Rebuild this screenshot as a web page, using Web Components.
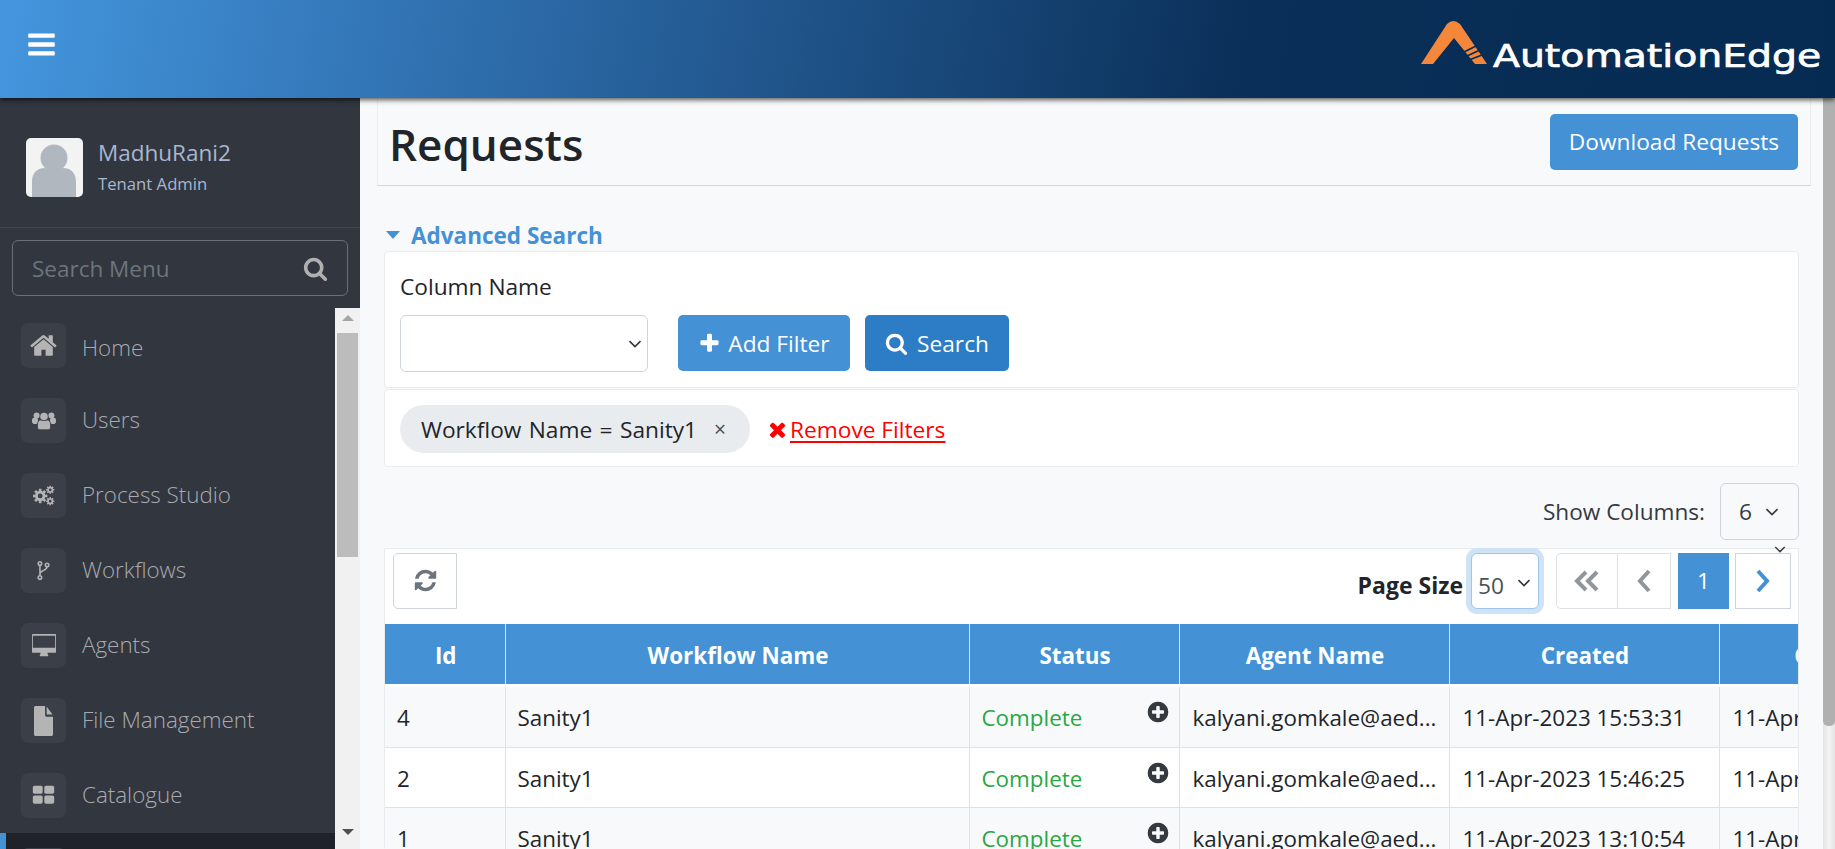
<!DOCTYPE html>
<html>
<head>
<meta charset="utf-8">
<title>Requests</title>
<style>
  html, body { margin: 0; height: 100%; overflow: hidden; }
  body { font-family: "Open Sans", "Liberation Sans", sans-serif; color: #212529; background: #f8f9fa; }
  ae-app { height: 100vh; }
</style>
</head>
<body>
<ae-app>
  <ae-header slot="header"></ae-header>
  <ae-sidebar slot="sidebar" user="MadhuRani2" role="Tenant Admin">
    <ae-nav-item icon="home">Home</ae-nav-item>
    <ae-nav-item icon="users">Users</ae-nav-item>
    <ae-nav-item icon="cogs">Process Studio</ae-nav-item>
    <ae-nav-item icon="fork">Workflows</ae-nav-item>
    <ae-nav-item icon="desktop">Agents</ae-nav-item>
    <ae-nav-item icon="file">File Management</ae-nav-item>
    <ae-nav-item icon="grid">Catalogue</ae-nav-item>
    <ae-nav-item icon="desktop" active></ae-nav-item>
  </ae-sidebar>
  <ae-requests slot="main"></ae-requests>
</ae-app>

<script>
// font awesome 4 style glyphs, drawn on a 1792 box unless a viewbox is given
const ICONS = {
  bars: 'M1664 1344v128q0 26-19 45t-45 19h-1408q-26 0-45-19t-19-45v-128q0-26 19-45t45-19h1408q26 0 45 19t19 45zm0-512v128q0 26-19 45t-45 19h-1408q-26 0-45-19t-19-45v-128q0-26 19-45t45-19h1408q26 0 45 19t19 45zm0-512v128q0 26-19 45t-45 19h-1408q-26 0-45-19t-19-45v-128q0-26 19-45t45-19h1408q26 0 45 19t19 45z',
  search: 'M1216 832q0-185-131.5-316.5t-316.5-131.5-316.5 131.5-131.5 316.5 131.5 316.5 316.5 131.5 316.5-131.5 131.5-316.5zm512 832q0 52-38 90t-90 38q-54 0-90-38l-343-342q-179 124-399 124-143 0-273.5-55.5t-225-150-150-225-55.5-273.5 55.5-273.5 150-225 225-150 273.5-55.5 273.5 55.5 225 150 150 225 55.5 273.5q0 220-124 399l343 343q37 37 37 90z',
  home: 'M1472 992v480q0 26-19 45t-45 19h-384v-384h-256v384h-384q-26 0-45-19t-19-45v-480q0-1 .5-3t.5-3l575-474 575 474q1 2 1 6zm223-69l-62 74q-8 9-21 11h-3q-13 0-21-7l-692-577-692 577q-12 8-24 7-13-2-21-11l-62-74q-8-10-7-23.5t11-21.5l719-599q32-26 76-26t76 26l244 204v-195q0-14 9-23t23-9h192q14 0 23 9t9 23v408l219 182q10 8 11 21.5t-7 23.5z',
  plus: 'M1600 736v192q0 40-28 68t-68 28h-416v416q0 40-28 68t-68 28h-192q-40 0-68-28t-28-68v-416h-416q-40 0-68-28t-28-68v-192q0-40 28-68t68-28h416v-416q0-40 28-68t68-28h192q40 0 68 28t28 68v416h416q40 0 68 28t28 68z',
  plusCircle: 'M1344 960v-128q0-26-19-45t-45-19h-256v-256q0-26-19-45t-45-19h-128q-26 0-45 19t-19 45v256h-256q-26 0-45 19t-19 45v128q0 26 19 45t45 19h256v256q0 26 19 45t45 19h128q26 0 45-19t19-45v-256h256q26 0 45-19t19-45zm320-64q0 209-103 385.5t-279.5 279.5-385.5 103-385.5-103-279.5-279.5-103-385.5 103-385.5 279.5-279.5 385.5-103 385.5 103 279.5 279.5 103 385.5z',
  times: 'M1490 1322q0 40-28 68l-136 136q-28 28-68 28t-68-28l-294-294-294 294q-28 28-68 28t-68-28l-136-136q-28-28-28-68t28-68l294-294-294-294q-28-28-28-68t28-68l136-136q28-28 68-28t68 28l294 294 294-294q28-28 68-28t68 28l136 136q28 28 28 68t-28 68l-294 294 294 294q28 28 28 68z',
  refresh: 'M1639 1056q0 5-1 7-64 268-268 434.5t-478 166.5q-146 0-282.5-55t-243.5-157l-129 129q-19 19-45 19t-45-19-19-45v-448q0-26 19-45t45-19h448q26 0 45 19t19 45-19 45l-137 137q71 66 161 102t187 36q134 0 250-65t186-179q11-17 53-117 8-23 30-23h192q13 0 22.5 9.5t9.5 22.5zm25-800v448q0 26-19 45t-45 19h-448q-26 0-45-19t-19-45 19-45l138-138q-148-137-349-137-134 0-250 65t-186 179q-11 17-53 117-8 23-30 23h-199q-13 0-22.5-9.5t-9.5-22.5v-7q65-268 270-434.5t480-166.5q146 0 284 55.5t245 156.5l130-129q19-19 45-19t45 19 19 45z',
  file: 'M1152 512v-472q22 14 36 28l408 408q14 14 28 36h-472zm-128 32q0 40 28 68t68 28h544v1056q0 40-28 68t-68 28h-1344q-40 0-68-28t-28-68v-1600q0-40 28-68t68-28h800v544z',
  grid: 'M832 1024v384q0 52-38 90t-90 38h-512q-52 0-90-38t-38-90v-384q0-52 38-90t90-38h512q52 0 90 38t38 90zm0-768v384q0 52-38 90t-90 38h-512q-52 0-90-38t-38-90v-384q0-52 38-90t90-38h512q52 0 90 38t38 90zm896 768v384q0 52-38 90t-90 38h-512q-52 0-90-38t-38-90v-384q0-52 38-90t90-38h512q52 0 90 38t38 90zm0-768v384q0 52-38 90t-90 38h-512q-52 0-90-38t-38-90v-384q0-52 38-90t90-38h512q52 0 90 38t38 90z',
  desktop: 'M1728 992v-832q0-13-9.5-22.5t-22.5-9.5h-1600q-13 0-22.5 9.5t-9.5 22.5v832q0 13 9.5 22.5t22.5 9.5h1600q13 0 22.5-9.5t9.5-22.5zm128-832v1088q0 66-47 113t-113 47h-544q0 37 16 77.5t32 71 16 43.5q0 26-19 45t-45 19h-512q-26 0-45-19t-19-45q0-14 16-44t32-70 16-78h-544q-66 0-113-47t-47-113v-1088q0-66 47-113t113-47h1632q66 0 113 47t47 113z',
};

function gear(cx, cy, r) {
  const teeth = 8;
  let out = '';
  for (let i = 0; i < teeth; i++) {
    const a = i * 360 / teeth;
    out += `<rect x="${cx - r * 0.24}" y="${cy - r * 1.3}" width="${r * 0.48}" height="${r * 0.6}" transform="rotate(${a} ${cx} ${cy})"/>`;
  }
  out += `<circle cx="${cx}" cy="${cy}" r="${r * 0.68}" fill="none" stroke="currentColor" stroke-width="${r * 0.5}"/>`;
  return out;
}

// the few that have no single path here are made of plain shapes
const SHAPES = {
  users: `<svg viewBox="0 0 24 20" fill="currentColor">
      <circle cx="4.6" cy="5" r="3"/><circle cx="19.4" cy="5" r="3"/><circle cx="12" cy="6" r="3.8"/>
      <rect x="0" y="7" width="6" height="6.5" rx="2.8"/><rect x="18" y="7" width="6" height="6.5" rx="2.8"/>
      <path d="M5.5 13.5c0-3 2-4.3 3.500-4 1 .7 5 .7 6 0 1.500-.3 3.500 1 3.500 4v3.500c0 1.300-1 2.300-2.300 2.300H7.800c-1.300 0-2.300-1-2.300-2.300z" stroke="#3a3f48" stroke-width=".8"/>
    </svg>`,
  cogs: `<svg viewBox="0 0 24 22" fill="currentColor">${gear(8, 11.5, 5.8)}${gear(18.5, 5, 3.3)}${gear(18.5, 17, 3.3)}</svg>`,
  fork: `<svg viewBox="0 0 16 24" fill="none" stroke="currentColor" stroke-width="2">
      <circle cx="3.500" cy="3.200" r="2.200"/><circle cx="3.500" cy="20.800" r="2.200"/><circle cx="12.500" cy="5" r="2.200"/>
      <path d="M3.500 5.400v13.200M12.500 7.200c0 5-9 4.300-9 9.300"/>
    </svg>`,
  file: `<svg viewBox="128 0 1536 1792" preserveAspectRatio="none" fill="currentColor"><path d="${ICONS.file}"/></svg>`,
};

function icon(name) {
  if (SHAPES[name]) return SHAPES[name];
  return `<svg viewBox="0 0 1792 1792" fill="currentColor"><path d="${ICONS[name]}"/></svg>`;
}

const CHEVRON = '<svg viewBox="0 0 14 8" fill="none" stroke="currentColor" stroke-width="1.700"><path d="M1.500 1.200 7 6.500l5.500-5.300"/></svg>';

class AeApp extends HTMLElement {
  constructor() {
    super();
    this.attachShadow({ mode: 'open' }).innerHTML = `
      <style>
        :host { display: grid; grid-template-columns: 360px 1fr; grid-template-rows: 98px 1fr; }
        .top { grid-column: 1 / 3; position: relative; z-index: 2; }
        .side, .main { min-height: 0; min-width: 0; overflow: hidden; }
      </style>
      <div class="top"><slot name="header"></slot></div>
      <div class="side"><slot name="sidebar"></slot></div>
      <div class="main"><slot name="main"></slot></div>`;
  }
}

class AeHeader extends HTMLElement {
  constructor() {
    super();
    this.attachShadow({ mode: 'open' }).innerHTML = `
      <style>
        :host {
          display: flex; align-items: flex-start; justify-content: space-between; height: 98px;
          padding: 0 16px 0 26px; box-sizing: border-box;
          background: linear-gradient(100deg, #4496de 0%, #2f6fae 25%, #0a2f58 68%, #062b52 100%);
          box-shadow: 0 2px 5px rgba(0, 0, 0, .65);
        }
        .burger { width: 31px; height: 31px; color: #fff; margin-top: 29px; }
        .burger svg { width: 100%; height: 100%; display: block; }
        .logo { display: flex; align-items: flex-end; gap: 6px; margin-top: 20px; }
        .logo svg { width: 66px; height: 46px; display: block; flex: none; margin-left: 1px; }
        .mark { width: 326px; height: 46px; display: flex; align-items: flex-end; }
        .name {
          display: block; color: #fff; font: 400 32px/32px "DejaVu Sans", sans-serif;
          -webkit-text-stroke: .7px #fff; transform: scaleX(1.23); transform-origin: left bottom;
          white-space: nowrap; margin-bottom: -6px;
        }
      </style>
      <div class="burger">${icon('bars')}</div>
      <div class="logo">
        <svg viewBox="0 0 66 46">
          <path d="M0 44 26 4Q32-2 39 4L66 44H54L33 18 12 44z" fill="#f5873a"/>
          <path d="M43 32l14-7M46 36l13-6M48 40l13-5" stroke="#082c55" stroke-width="1.800"/>
        </svg>
        <div class="mark"><span class="name">AutomationEdge</span></div>
      </div>`;
  }
}

class AeSidebar extends HTMLElement {
  constructor() {
    super();
    this.attachShadow({ mode: 'open' }).innerHTML = `
      <style>
        :host { display: flex; flex-direction: column; height: 100%; background: #32363f; }
        .profile { display: flex; gap: 15px; height: 130px; padding: 40px 26px 0; box-sizing: border-box; border-bottom: 1px solid #41454e; }
        .avatar { width: 57px; height: 59px; border-radius: 5px; background: #f3f3f3; overflow: hidden; flex: none; }
        .avatar svg { display: block; width: 100%; height: 100%; }
        .user { font-size: 22.5px; line-height: 30px; color: #a7b7d1; }
        .role { font-size: 16.7px; line-height: 24px; margin-top: 4px; color: #a7b7d1; }
        .search {
          display: flex; align-items: center; justify-content: space-between; height: 56px; margin: 12px; padding: 0 19px;
          box-sizing: border-box; border: 1px solid #6b7075; border-radius: 6px; font-size: 22.5px; color: #6c757d;
        }
        .search svg { width: 25px; height: 25px; color: #b0b0b0; display: block; }
        .list { position: relative; flex: 1; min-height: 0; overflow: hidden; }
        .bar { position: absolute; top: 0; right: 0; bottom: 0; width: 25px; background: #f1f1f1; }
        .thumb { position: absolute; top: 25px; left: 2px; right: 2px; height: 224px; background: #bcbcbc; }
        .up, .down { position: absolute; left: 7px; width: 0; height: 0; border-left: 6px solid transparent; border-right: 6px solid transparent; }
        .up { top: 7px; border-bottom: 6px solid #a5a5a5; }
        .down { top: 521px; border-top: 6px solid #505050; }
      </style>
      <div class="profile">
        <div class="avatar">
          <svg viewBox="0 0 57 59">
            <circle cx="28" cy="20" r="13.500" fill="#b0b7be"/>
            <path d="M6 59V44C6 34 12 30 19 30q9 5 18 0c7 0 13 4 13 14v15z" fill="#b0b7be"/>
          </svg>
        </div>
        <div class="who"><div class="user">${this.getAttribute('user')}</div><div class="role">${this.getAttribute('role')}</div></div>
      </div>
      <div class="search"><span>Search Menu</span>${icon('search')}</div>
      <div class="list">
        <slot></slot>
        <div class="bar"><i class="up"></i><div class="thumb"></div><i class="down"></i></div>
      </div>`;
  }
}

class AeNavItem extends HTMLElement {
  constructor() {
    super();
    this.attachShadow({ mode: 'open' }).innerHTML = `
      <style>
        :host { display: flex; gap: 16px; height: 75px; padding: 15px 0 0 21px; box-sizing: border-box; color: #a9abb0; font-size: 22.4px; font-weight: 300; }
        :host([active]) { background: #1f2229; box-shadow: inset 6px 0 0 #4491d6; }
        .box { width: 45px; height: 45px; flex: none; border-radius: 7px; background: #3a3f48; display: flex; align-items: center; justify-content: center; color: #b4b4b4; }
        .box svg { width: 24px; height: 24px; display: block; }
        .box.home svg { width: 29px; height: 29px; }
        .box.grid svg { width: 23px; height: 23px; }
        .box.file svg { width: 19px; height: 30px; }
        .box.fork svg { width: 13px; height: 19px; }
        .box.users svg, .box.cogs svg { width: 24px; height: 21px; }
        .label { line-height: 44px; }
        :host(:first-child) .label { line-height: 50px; }
      </style>
      <span class="box ${this.getAttribute('icon')}">${icon(this.getAttribute('icon'))}</span>
      <span class="label"><slot></slot></span>`;
  }
}

class AeButton extends HTMLElement {
  constructor() {
    super();
    const ic = this.getAttribute('icon');
    this.attachShadow({ mode: 'open' }).innerHTML = `
      <style>
        :host { display: inline-flex; align-items: center; justify-content: center; gap: 7px; height: 56px; box-sizing: border-box; border-radius: 5px; background: #4491d6; color: #fff; font-size: 22.7px; padding: 0 20px; }
        :host([dark]) { background: #2d7cc6; gap: 9px; }
        svg { width: 23px; height: 23px; display: block; }
      </style>
      ${ic ? icon(ic) : ''}<span><slot></slot></span>`;
  }
}

class AeSelect extends HTMLElement {
  constructor() {
    super();
    this.attachShadow({ mode: 'open' }).innerHTML = `
      <style>
        :host { display: flex; align-items: center; justify-content: space-between; height: 57px; box-sizing: border-box; background: #fff; border: 1px solid #ced4da; border-radius: 6px; color: #495057; font-size: 22.7px; }
        svg { width: 14px; height: 8px; display: block; color: #343a40; }
      </style>
      <span><slot></slot></span>${CHEVRON}`;
  }
}

class AeTable extends HTMLElement {
  constructor() {
    super();
    const cols = [120, 464, 210, 270, 270, 270];
    const heads = ['Id', 'Workflow Name', 'Status', 'Agent Name', 'Created', 'Completed'];
    const rows = [
      ['4', '11-Apr-2023 15:53:31'],
      ['2', '11-Apr-2023 15:46:25'],
      ['1', '11-Apr-2023 13:10:54'],
    ];
    this.attachShadow({ mode: 'open' }).innerHTML = `
      <style>
        :host { display: block; overflow: hidden; }
        table { border-collapse: collapse; table-layout: fixed; width: ${cols.reduce((a, b) => a + b)}px; font-size: 22.4px; }
        th { height: 60px; padding: 2px 0 0 2px; box-sizing: border-box; background: #4491d6; color: #fff; font-weight: 700; border-right: 1px solid #e3e6ea; white-space: nowrap; overflow: hidden; box-shadow: 0 3px 0 #dee2e6; }
        tbody::before { content: ""; display: block; height: 3px; }
        td { height: 60px; padding: 2px 0 0 12px; box-sizing: border-box; border-right: 1px solid #dee2e6; border-bottom: 1px solid #dee2e6; color: #212529; white-space: nowrap; overflow: hidden; position: relative; }
        td:nth-child(n+4) { padding-left: 13px; }
        tr:nth-child(odd) td { background: #f8f9fa; }
        tr:nth-child(even) td { background: #fff; }
        .ok { color: #28a745; }
        .more { position: absolute; right: 9px; top: 13px; width: 24px; height: 24px; color: #343a40; }
        .more svg { width: 100%; height: 100%; display: block; }
      </style>
      <table>
        <colgroup>${cols.map((c) => `<col style="width:${c}px">`).join('')}</colgroup>
        <thead><tr>${heads.map((h) => `<th>${h}</th>`).join('')}</tr></thead>
        <tbody>${rows.map((r) => `<tr>
          <td>${r[0]}</td><td>Sanity1</td>
          <td class="ok">Complete<span class="more">${icon('plusCircle')}</span></td>
          <td>kalyani.gomkale@aed...</td><td>${r[1]}</td><td>${r[1]}</td></tr>`).join('')}
        </tbody>
      </table>`;
  }
}

class AeRequests extends HTMLElement {
  constructor() {
    super();
    this.attachShadow({ mode: 'open' }).innerHTML = `
      <style>
        :host { display: flex; height: 100%; }
        .page { flex: 1; min-width: 0; display: flex; flex-direction: column; padding: 0 24px 0 24px; background: #f8f9fa; overflow: hidden; }
        .title { display: flex; align-items: center; justify-content: space-between; flex: none; height: 88px; box-sizing: border-box; margin: 0 -12px 0 -7px; padding: 0 12px 0 11px; border: 1px solid #eceef0; border-top: 0; border-bottom: 1px solid #d3d6da; }
        h1 { margin: 0; font-size: 44px; font-weight: 600; color: #212529; line-height: 1; position: relative; top: 2px; }
        .adv { display: flex; align-items: center; gap: 11px; flex: none; height: 32px; margin-top: 33px; color: #4491d6; font-size: 22.5px; font-weight: 700; }
        .adv i { width: 0; height: 0; border-left: 7px solid transparent; border-right: 7px solid transparent; border-top: 8px solid #4491d6; margin-left: 2px; }
        .card { flex: none; background: #fff; border: 1px solid #e9ecef; border-radius: 4px; box-sizing: border-box; }
        .filter { height: 137px; padding: 17px 15px 0; }
        .filter label { display: block; font-size: 22.7px; line-height: 36px; }
        .form { display: flex; margin-top: 10px; }
        .form ae-select { width: 248px; padding: 0 5px 0 0; justify-content: flex-end; }
        .form ae-button:first-of-type { width: 172px; padding: 0; margin-left: 30px; }
        .form ae-button[dark] { width: 144px; padding: 0; margin-left: 15px; }
        .chips { display: flex; align-items: center; height: 78px; margin-top: 1px; padding: 2px 15px 0; }
        .chip { display: flex; align-items: center; justify-content: space-between; width: 350px; height: 48px; box-sizing: border-box; padding: 0 24px 0 21px; border-radius: 24px; background: #e9ecef; font-size: 22.7px; word-spacing: 1.500px; white-space: nowrap; }
        .chip b { font-weight: 400; color: #495057; font-size: 21px; }
        .clear { display: flex; align-items: center; gap: 1px; margin-left: 16px; color: #f00; font-size: 22.7px; }
        .clear svg { width: 23px; height: 23px; display: block; }
        .clear u { text-underline-offset: 3px; }
        .cols { display: flex; align-items: center; justify-content: flex-end; gap: 15px; flex: none; height: 57px; margin-top: 16px; font-size: 22.6px; color: #343a40; }
        .cols ae-select { width: 79px; padding: 0 19px 0 18px; background: #f8f9fa; color: #343a40; }
        .grid { position: relative; flex: 1; min-height: 0; margin-top: 8px; border: 1px solid #e9ecef; border-bottom: 0; background: #fff; border-radius: 2px; }
        .tools { display: flex; align-items: center; height: 75px; padding: 0 7px 12px 8px; box-sizing: border-box; }
        .refresh { width: 64px; height: 56px; box-sizing: border-box; display: flex; align-items: center; justify-content: center; border: 1px solid #ced4da; border-radius: 5px 0 0 5px; color: #6c757d; }
        .refresh svg { width: 25px; height: 25px; }
        .size { margin: 8px 0 0 auto; font-weight: 700; font-size: 23px; }
        .tools ae-select { width: 68px; height: 56px; margin-left: 8px; padding: 4px 7px 0 6px; border-color: #9ec5ea; box-shadow: 0 0 0 5px #cfe3f6; color: #495057; }
        .tools ae-select span { display: block; padding-top: 6px; }
        .pg { display: flex; align-items: center; justify-content: center; height: 56px; box-sizing: border-box; border: 1px solid #dee2e6; background: #fff; color: #8f969c; }
        .pg svg { display: block; }
        .first { width: 61px; margin-left: 17px; border-radius: 5px 0 0 5px; border-right: 0; }
        .prev { width: 54px; }
        .one { width: 51px; margin-left: 7px; border: 0; background: #4491d6; color: #fff; font-size: 22.6px; }
        .next { width: 56px; margin-left: 6px; border-color: #ced4da; color: #4491d6; }
        .stray { position: absolute; right: 12px; top: -3px; width: 12px; height: 7px; color: #343a40; }
        .stray svg { display: block; width: 100%; height: 100%; }
        .scroll { flex: none; width: 12px; background: linear-gradient(to right, #e4e4e4, #f4f4f4 50%, #e4e4e4); }
        .scroll div { height: 628px; background: #b0b0b0; border-radius: 0 0 5px 5px; }
      </style>
      <div class="page">
        <div class="title"><h1>Requests</h1><ae-button style="width:248px;padding:0">Download Requests</ae-button></div>
        <div class="adv"><i></i>Advanced Search</div>
        <div class="card filter">
          <label>Column Name</label>
          <div class="form">
            <ae-select></ae-select>
            <ae-button icon="plus">Add Filter</ae-button>
            <ae-button dark icon="search">Search</ae-button>
          </div>
        </div>
        <div class="card chips">
          <div class="chip"><span>Workflow Name = Sanity1</span><b>&times;</b></div>
          <div class="clear">${icon('times')}<u>Remove Filters</u></div>
        </div>
        <div class="cols"><span>Show Columns:</span><ae-select>6</ae-select></div>
        <div class="grid">
          <div class="tools">
            <div class="refresh">${icon('refresh')}</div>
            <span class="size">Page Size</span>
            <ae-select><span>50</span></ae-select>
            <div class="pg first"><svg width="26" height="22" viewBox="0 0 26 22" fill="none" stroke="currentColor" stroke-width="4"><path d="M12 2 3 11l9 9M23 2l-9 9 9 9"/></svg></div>
            <div class="pg prev"><svg width="14" height="24" viewBox="0 0 14 24" fill="none" stroke="currentColor" stroke-width="4"><path d="M12 2 3 12l9 10"/></svg></div>
            <div class="pg one">1</div>
            <div class="pg next"><svg width="14" height="24" viewBox="0 0 14 24" fill="none" stroke="currentColor" stroke-width="4"><path d="M2 2l9 10-9 10"/></svg></div>
          </div>
          <div class="stray">${CHEVRON}</div>
          <ae-table></ae-table>
        </div>
      </div>
      <div class="scroll"><div></div></div>`;
  }
}

customElements.define('ae-app', AeApp);
customElements.define('ae-header', AeHeader);
customElements.define('ae-sidebar', AeSidebar);
customElements.define('ae-nav-item', AeNavItem);
customElements.define('ae-button', AeButton);
customElements.define('ae-select', AeSelect);
customElements.define('ae-table', AeTable);
customElements.define('ae-requests', AeRequests);
</script>
</body>
</html>
